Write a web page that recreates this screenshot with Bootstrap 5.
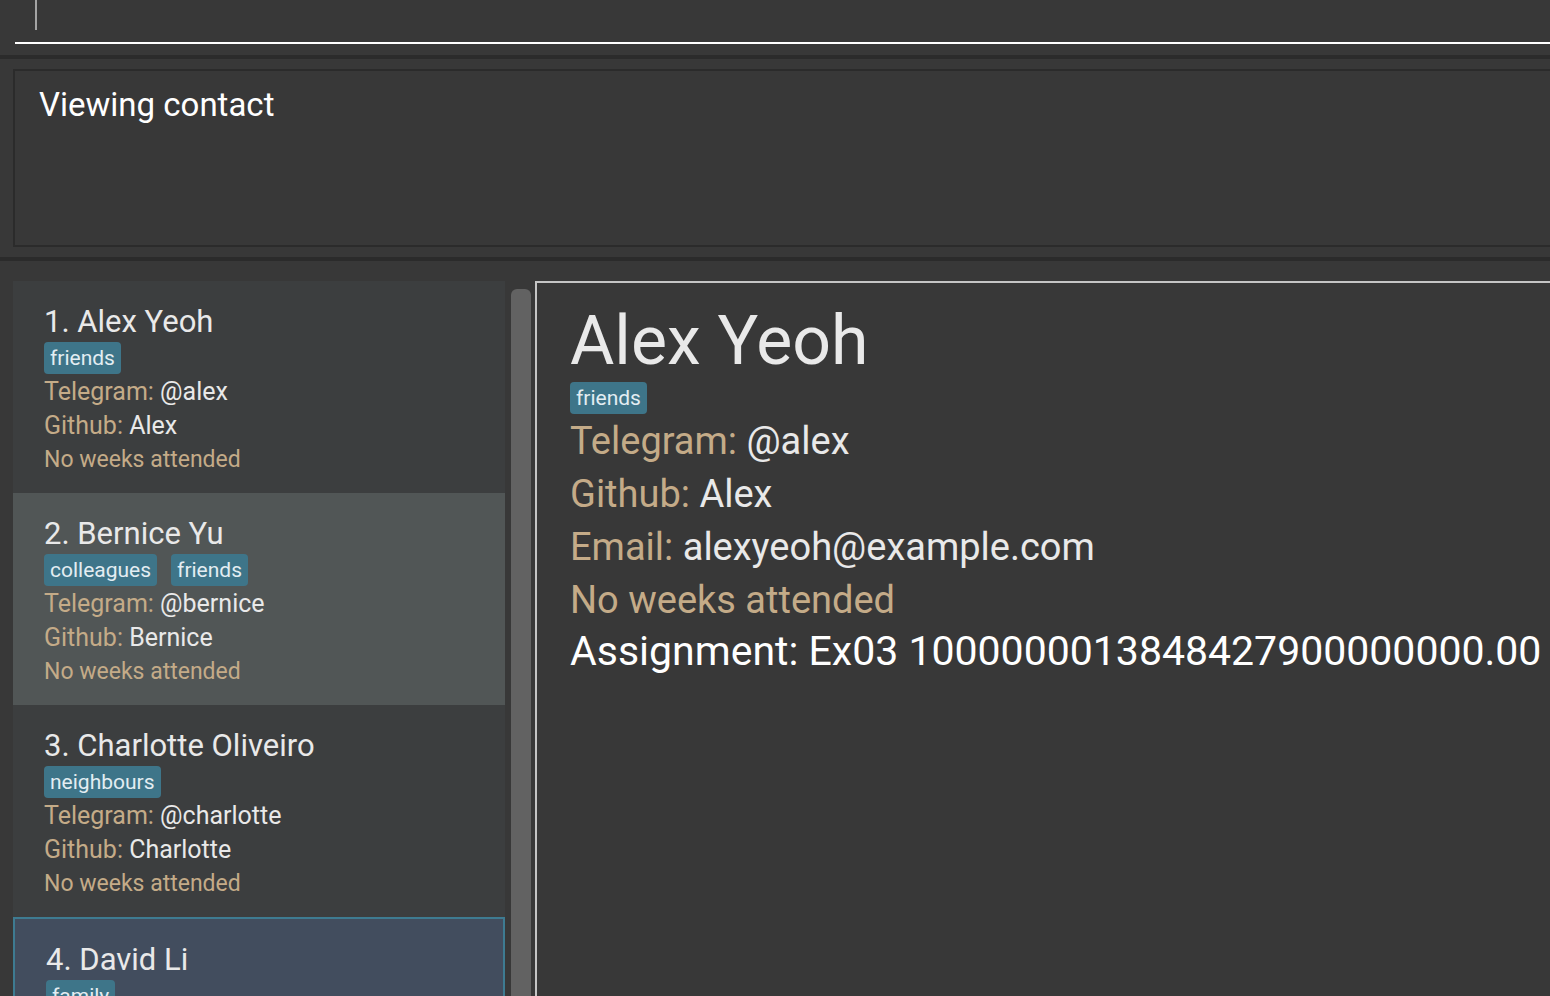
<!DOCTYPE html>
<html lang="en" data-bs-theme="dark">
<head>
<meta charset="utf-8">
<meta name="viewport" content="width=device-width, initial-scale=1">
<title>Contacts</title>
<link href="https://cdn.jsdelivr.net/npm/bootstrap@5.3.0/dist/css/bootstrap.min.css" rel="stylesheet">
<style>
  body { background: #383838; color: #e9e9e9; font-family: Roboto, "Liberation Sans", sans-serif; font-weight: 400; }
  h1, h2 { color: inherit; }
  .command-bar { height: 55px; padding-left: 15px; padding-bottom: 11px; }
  .command-bar .form-control { background: transparent; border: 0; border-bottom: 2px solid #fff; color: #fff; height: 44px; padding: 0 20px; font-size: 33px; box-shadow: none; }
  .caret { left: 35px; top: 0; width: 2px; height: 30px; background: #a4a4a4; }
  .result-pane { border: solid #2b2b2b; border-width: 4px 0; padding: 10px 0 10px 13px; }
  .result-pane .form-control { background: transparent; border: 2px solid #2b2b2b; border-right: 0; color: #fff; height: 178px; padding: 9px 24px; font-size: 33px; line-height: 50px; resize: none; box-shadow: none; }
  .main-pane { padding: 20px 0 0 13px; }
  .contact-list { width: 492px; }
  .contact { background: #3c3e3f; padding: 23px 31px 16px; }
  .contact:nth-child(even) { background: #515656; }
  .contact.selected { background: #424d5e; border: 2px solid #3e7b91; }
  .contact h2 { font-size: 31px; line-height: 36px; font-weight: 400; margin-bottom: 2px; }
  .tags { gap: 14px; height: 32px; margin-bottom: 1px; }
  .tag { background: #3e7589; color: #e3edf2; border-radius: 4px; padding: 0 6px; font-size: 21px; line-height: 32px; }
  .contact p { font-size: 25px; line-height: 34px; }
  .contact .weeks { font-size: 23px; }
  .tan { color: #c4ab88; }
  .scroll-track { width: 20px; margin: 8px 4px 0 6px; }
  .scroll-thumb { background: #626262; border-radius: 6px 6px 0 0; }
  .details { border: solid #c5c5c5; border-width: 2px 0 0 2px; padding: 17px 0 0 33px; }
  .details h1 { font-size: 68px; line-height: 82px; font-weight: 400; }
  .details p { font-size: 38px; line-height: 53px; }
  .details .assignment { font-size: 41px; line-height: 48px; }
</style>
</head>
<body class="vh-100 overflow-hidden d-flex flex-column">
  <form class="command-bar position-relative flex-shrink-0">
    <input class="form-control rounded-0" type="text" aria-label="Command">
    <span class="caret position-absolute"></span>
  </form>
  <section class="result-pane flex-shrink-0">
    <textarea class="form-control rounded-0" aria-label="Result" readonly>Viewing contact</textarea>
  </section>
  <main class="main-pane d-flex flex-grow-1 overflow-hidden">
    <ul class="contact-list list-unstyled mb-0 flex-shrink-0 overflow-hidden">
      <li class="contact">
        <h2>1. Alex Yeoh</h2>
        <div class="tags d-flex"><span class="tag">friends</span></div>
        <p class="mb-0"><span class="tan">Telegram:</span> @alex</p>
        <p class="mb-0"><span class="tan">Github:</span> Alex</p>
        <p class="mb-0 tan weeks">No weeks attended</p>
      </li>
      <li class="contact">
        <h2>2. Bernice Yu</h2>
        <div class="tags d-flex"><span class="tag">colleagues</span><span class="tag">friends</span></div>
        <p class="mb-0"><span class="tan">Telegram:</span> @bernice</p>
        <p class="mb-0"><span class="tan">Github:</span> Bernice</p>
        <p class="mb-0 tan weeks">No weeks attended</p>
      </li>
      <li class="contact">
        <h2>3. Charlotte Oliveiro</h2>
        <div class="tags d-flex"><span class="tag">neighbours</span></div>
        <p class="mb-0"><span class="tan">Telegram:</span> @charlotte</p>
        <p class="mb-0"><span class="tan">Github:</span> Charlotte</p>
        <p class="mb-0 tan weeks">No weeks attended</p>
      </li>
      <li class="contact selected">
        <h2>4. David Li</h2>
        <div class="tags d-flex"><span class="tag">family</span></div>
      </li>
    </ul>
    <div class="scroll-track flex-shrink-0"><div class="scroll-thumb h-100"></div></div>
    <section class="details flex-grow-1 overflow-hidden text-nowrap">
      <h1 class="mb-0">Alex Yeoh</h1>
      <div class="tags d-flex"><span class="tag">friends</span></div>
      <p class="mb-0"><span class="tan">Telegram:</span> @alex</p>
      <p class="mb-0"><span class="tan">Github:</span> Alex</p>
      <p class="mb-0"><span class="tan">Email:</span> alexyeoh@example.com</p>
      <p class="mb-0 tan">No weeks attended</p>
      <p class="mb-0 text-white assignment">Assignment: Ex03 1000000013848427900000000.00</p>
    </section>
  </main>
<script src="https://cdn.jsdelivr.net/npm/bootstrap@5.3.0/dist/js/bootstrap.bundle.min.js"></script>
</body>
</html>
